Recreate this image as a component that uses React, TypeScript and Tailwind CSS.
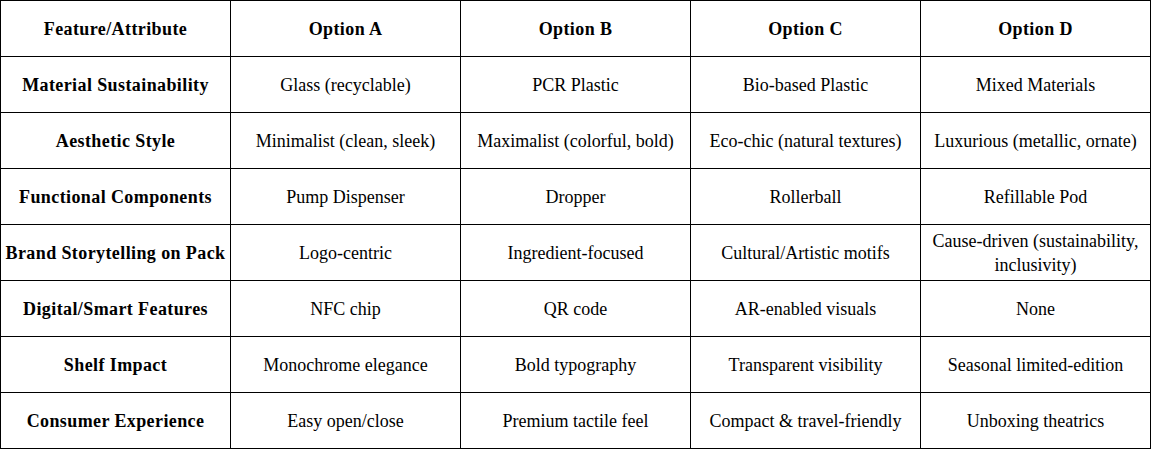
import React from "react";

const header = ["Feature/Attribute", "Option A", "Option B", "Option C", "Option D"];
const rows: string[][] = [
  ["Material Sustainability", "Glass (recyclable)", "PCR Plastic", "Bio-based Plastic", "Mixed Materials"],
  ["Aesthetic Style", "Minimalist (clean, sleek)", "Maximalist (colorful, bold)", "Eco-chic (natural textures)", "Luxurious (metallic, ornate)"],
  ["Functional Components", "Pump Dispenser", "Dropper", "Rollerball", "Refillable Pod"],
  ["Brand Storytelling on Pack", "Logo-centric", "Ingredient-focused", "Cultural/Artistic motifs", "Cause-driven (sustainability, inclusivity)"],
  ["Digital/Smart Features", "NFC chip", "QR code", "AR-enabled visuals", "None"],
  ["Shelf Impact", "Monochrome elegance", "Bold typography", "Transparent visibility", "Seasonal limited-edition"],
  ["Consumer Experience", "Easy open/close", "Premium tactile feel", "Compact & travel-friendly", "Unboxing theatrics"],
];

export default function App() {
  return (
    <div className="bg-white w-[1151px] h-[449px]" style={{ fontFamily: '"Liberation Serif", "Times New Roman", serif' }}>
      <div className="grid grid-cols-[repeat(5,229px)] auto-rows-[55px] gap-px bg-black p-px w-[1151px] text-[18px] leading-[24px] text-black">
        {header.map((h, i) => (
          <div key={"h" + i} className="bg-white flex items-center justify-center text-center px-1 font-bold tracking-[0.4px]">
            {h}
          </div>
        ))}
        {rows.map((r, ri) =>
          r.map((c, ci) => (
            <div
              key={ri + "-" + ci}
              className={`bg-white flex items-center justify-center text-center px-1 ${ci === 0 ? "font-bold tracking-[0.4px]" : ""}`}
            >
              {c}
            </div>
          ))
        )}
      </div>
    </div>
  );
}
